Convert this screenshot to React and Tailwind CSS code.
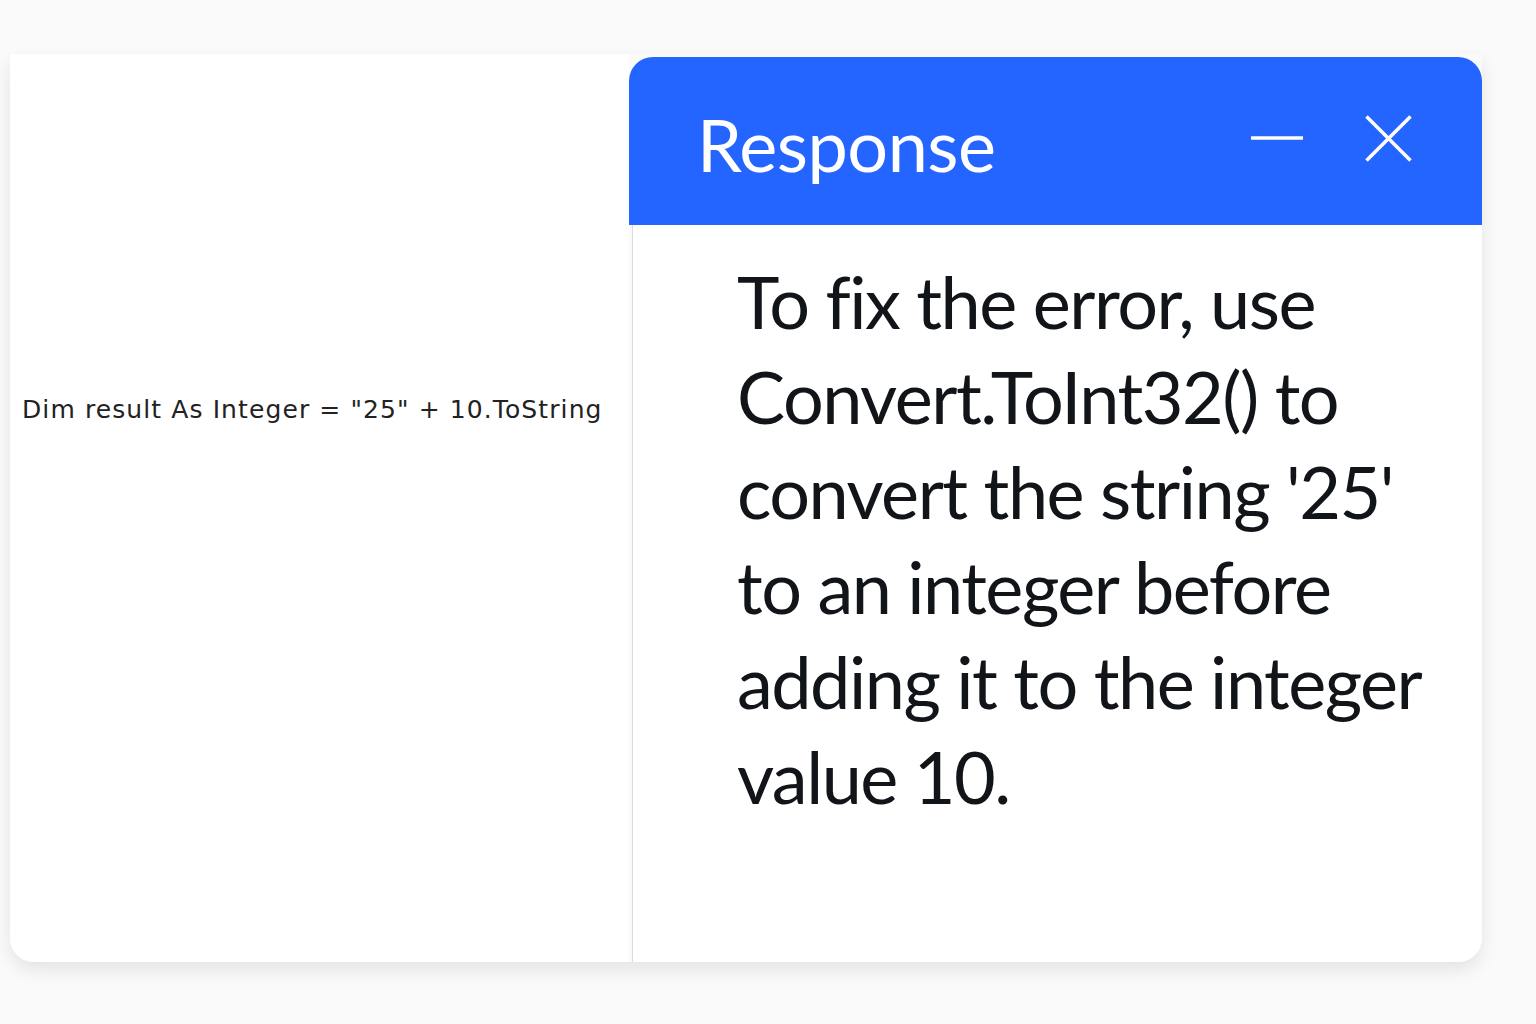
export default function App() {
  return (
    <div className="min-h-screen w-full bg-[#fafafa] pt-[54px] pl-[10px]">
      <div className="flex w-[1472px] h-[908px] rounded-b-[24px] shadow-[0_8px_18px_rgba(0,0,0,0.09)]">
        <div className="w-[619px] h-full bg-white rounded-bl-[24px] pt-[340px] pl-[12px]">
          <p className="[font-family:'DejaVu_Sans',sans-serif] text-[25px] tracking-[1.1px] leading-[32px] text-[#222] whitespace-nowrap">
            Dim result As Integer = "25" + 10.ToString
          </p>
        </div>
        <div className="flex-1 flex flex-col pt-[3px]">
          <div className="h-[168px] bg-[#2565ff] rounded-t-[24px] flex items-center pl-[68px] pr-[70px]">
            <h1 className="[font-family:Lato,sans-serif] text-[72px] tracking-[-0.5px] leading-none text-white mt-[6px]">
              Response
            </h1>
            <div className="ml-auto flex items-center gap-[62px] mt-[-6px]">
              <svg width="52" height="4" viewBox="0 0 52 4">
                <line x1="0" y1="2" x2="52" y2="2" stroke="white" strokeWidth="3.5" />
              </svg>
              <svg width="47" height="47" viewBox="0 0 47 47">
                <path d="M1.5 1.5 L45.5 45.5 M45.5 1.5 L1.5 45.5" stroke="white" strokeWidth="3.5" />
              </svg>
            </div>
          </div>
          <div className="flex-1 bg-white rounded-br-[24px] ml-[3px] border-l border-[#dcdcdc] pl-[104px] pr-[40px] pt-[29px]">
            <p className="[font-family:Lato,sans-serif] text-[72px] tracking-[-1.5px] leading-[95px] text-[#111418]">
              To fix the error, use Convert.ToInt32() to convert the string '25' to an integer before adding it to the integer value 10.
            </p>
          </div>
        </div>
      </div>
    </div>
  );
}
